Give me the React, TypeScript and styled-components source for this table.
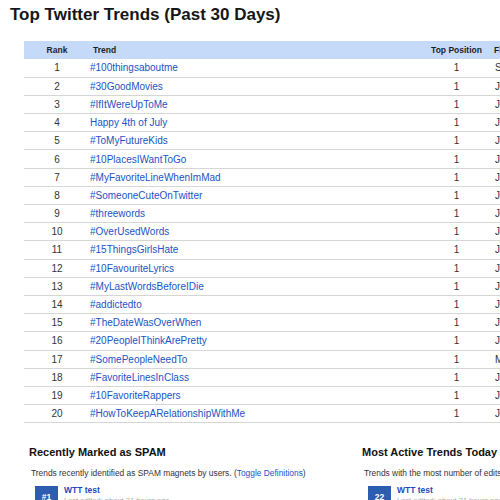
import React from "react";
import styled, { createGlobalStyle } from "styled-components";

const Global = createGlobalStyle`
  html, body { margin: 0; padding: 0; background: #fff; }
  body { font-family: "Liberation Sans", Arial, Helvetica, sans-serif; color: #222; overflow: hidden; }
`;

const Page = styled.div`
  width: 500px;
  height: 500px;
  overflow: hidden;
  position: relative;
`;

const Title = styled.h1`
  margin: 0;
  padding: 5px 0 0 10px;
  font-size: 17px;
  line-height: 20px;
  font-weight: bold;
  color: #161616;
  white-space: nowrap;
`;

const TableWrap = styled.div`
  margin: 16px 0 0 24px;
  width: 640px;
`;

const Table = styled.table`
  border-collapse: collapse;
  table-layout: fixed;
  width: 640px;
  font-size: 10px;
`;

const HeadRow = styled.tr`
  background: #c5d9f9;
  height: 18px;
`;

const Th = styled.th<{ $align?: string; $pad?: number }>`
  font-size: 8.5px;
  font-weight: bold;
  color: #1e1e1e;
  text-align: ${(p) => p.$align || "left"};
  padding: 0 0 0 ${(p) => p.$pad || 0}px;
  white-space: nowrap;
  overflow: hidden;
`;

const Row = styled.tr`
  height: 18.2px;
  border-bottom: 1px solid #d6d6d6;
`;

const Td = styled.td<{ $align?: string; $pad?: number }>`
  padding: 0 0 0 ${(p) => p.$pad || 0}px;
  text-align: ${(p) => p.$align || "left"};
  color: #333;
  white-space: nowrap;
  overflow: hidden;
  line-height: 17px;
`;

const TrendLink = styled.a`
  color: #2153c4;
  text-decoration: none;
`;

const Sections = styled.div`
  display: grid;
  grid-template-columns: 333px 333px;
  margin: 22px 0 0 29px;
  width: 700px;
`;

const Section = styled.div``;

const SectionTitle = styled.h2`
  margin: 0;
  font-size: 11px;
  line-height: 14px;
  font-weight: bold;
  color: #111;
  white-space: nowrap;
`;

const Desc = styled.p`
  margin: 9px 0 0 2px;
  font-size: 8.4px;
  line-height: 11px;
  color: #333;
  white-space: nowrap;
`;

const DescLink = styled.a`
  color: #2153c4;
  text-decoration: none;
`;

const Item = styled.div`
  display: flex;
  align-items: flex-start;
  gap: 6px;
  margin: 7px 0 0 6px;
`;

const Badge = styled.div`
  width: 23px;
  height: 22px;
  background: #2d5db1;
  color: #fff;
  font-size: 8.5px;
  font-weight: bold;
  display: flex;
  align-items: center;
  justify-content: center;
  flex-shrink: 0;
`;

const ItemBody = styled.div`
  display: flex;
  flex-direction: column;
`;

const ItemLink = styled.a`
  color: #1c48c2;
  font-size: 8.5px;
  font-weight: bold;
  line-height: 11px;
  text-decoration: none;
  margin-top: -1px;
`;

const ItemMeta = styled.span`
  color: #aaa;
  font-size: 7.5px;
  line-height: 10px;
  white-space: nowrap;
`;

const trends: [string, string][] = [
  ["#100thingsaboutme", "Sep 2, 2009"],
  ["#30GoodMovies", "Jul 1, 2009"],
  ["#IfItWereUpToMe", "Jul 2, 2009"],
  ["Happy 4th of July", "Jul 4, 2009"],
  ["#ToMyFutureKids", "Jul 5, 2009"],
  ["#10PlacesIWantToGo", "Jul 6, 2009"],
  ["#MyFavoriteLineWhenImMad", "Jul 7, 2009"],
  ["#SomeoneCuteOnTwitter", "Jul 8, 2009"],
  ["#threewords", "Jun 9, 2009"],
  ["#OverUsedWords", "Jul 10, 2009"],
  ["#15ThingsGirlsHate", "Jul 11, 2009"],
  ["#10FavouriteLyrics", "Jul 12, 2009"],
  ["#MyLastWordsBeforeIDie", "Jul 13, 2009"],
  ["#addictedto", "Jun 14, 2009"],
  ["#TheDateWasOverWhen", "Jul 15, 2009"],
  ["#20PeopleIThinkArePretty", "Jul 16, 2009"],
  ["#SomePeopleNeedTo", "May 17, 2009"],
  ["#FavoriteLinesInClass", "Jul 18, 2009"],
  ["#10FavoriteRappers", "Jul 19, 2009"],
  ["#HowToKeepARelationshipWithMe", "Jul 20, 2009"],
];

export default function App() {
  return (
    <Page>
      <Global />
      <Title>Top Twitter Trends (Past 30 Days)</Title>
      <TableWrap>
        <Table>
          <colgroup>
            <col style={{ width: 66 }} />
            <col style={{ width: 333 }} />
            <col style={{ width: 67 }} />
            <col style={{ width: 174 }} />
          </colgroup>
          <thead>
            <HeadRow>
              <Th $align="center">Rank</Th>
              <Th $pad={3}>Trend</Th>
              <Th $align="center">Top Position</Th>
              <Th $pad={4}>First Seen</Th>
            </HeadRow>
          </thead>
          <tbody>
            {trends.map(([name, date], i) => (
              <Row key={name}>
                <Td $align="center">{i + 1}</Td>
                <Td>
                  <TrendLink href="#">{name}</TrendLink>
                </Td>
                <Td $align="center">1</Td>
                <Td $pad={5}>{date}</Td>
              </Row>
            ))}
          </tbody>
        </Table>
      </TableWrap>
      <Sections>
        <Section>
          <SectionTitle>Recently Marked as SPAM</SectionTitle>
          <Desc>
            Trends recently identified as SPAM magnets by users. (
            <DescLink href="#">Toggle Definitions</DescLink>)
          </Desc>
          <Item>
            <Badge>#1</Badge>
            <ItemBody>
              <ItemLink href="#">WTT test</ItemLink>
              <ItemMeta>Last edited: about 21 hours ago</ItemMeta>
            </ItemBody>
          </Item>
        </Section>
        <Section>
          <SectionTitle>Most Active Trends Today</SectionTitle>
          <Desc>Trends with the most number of edits in the past 24 hours.</Desc>
          <Item>
            <Badge>22</Badge>
            <ItemBody>
              <ItemLink href="#">WTT test</ItemLink>
              <ItemMeta>Last edited: about 21 hours ago</ItemMeta>
            </ItemBody>
          </Item>
        </Section>
      </Sections>
    </Page>
  );
}
